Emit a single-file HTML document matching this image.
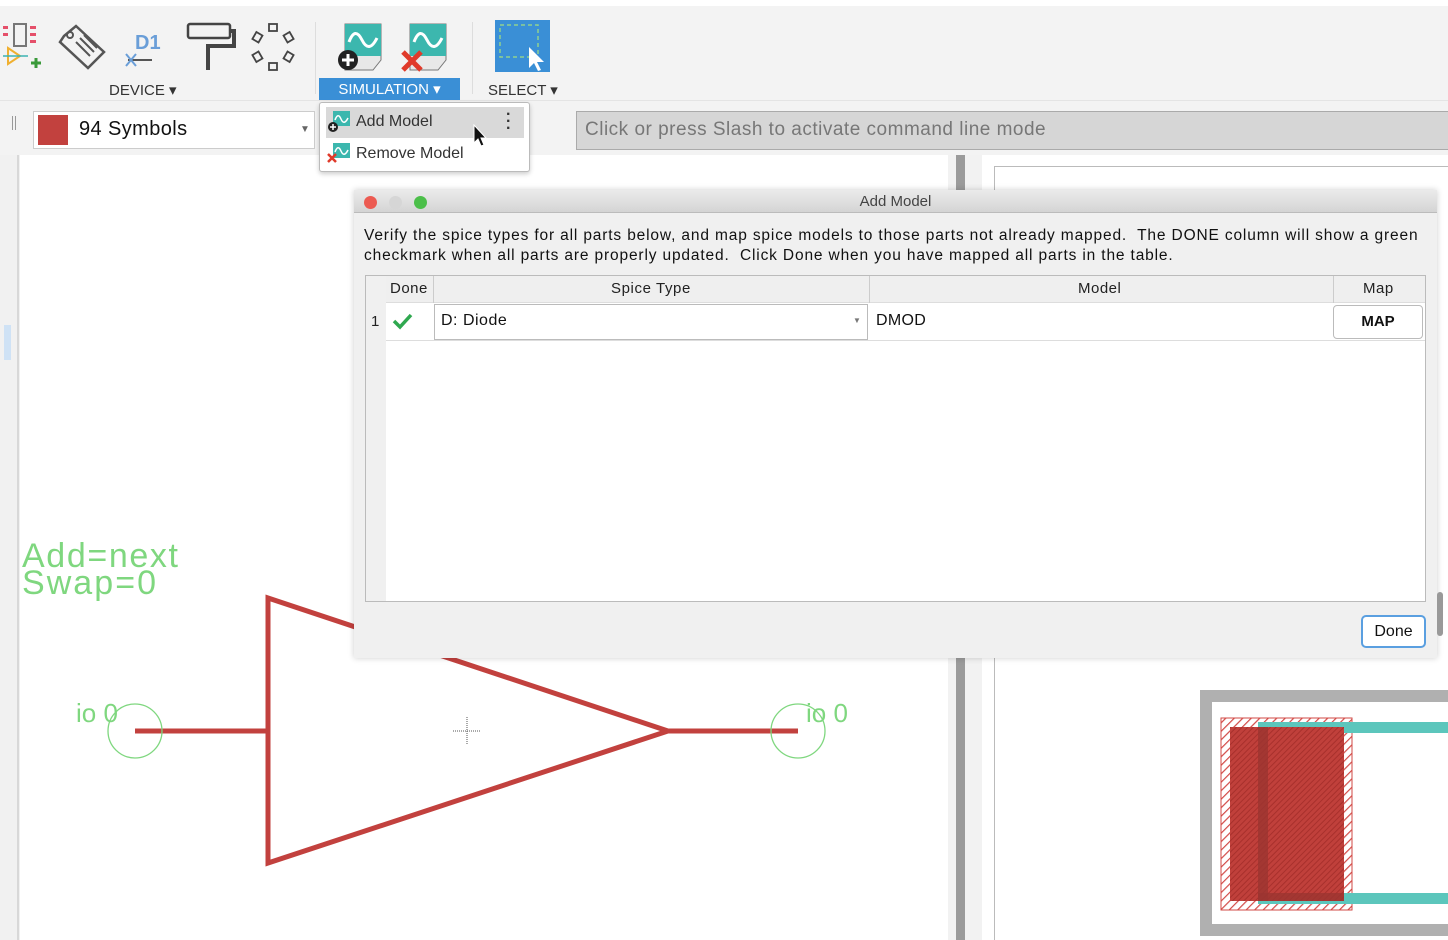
<!DOCTYPE html>
<html><head><style>
*{margin:0;padding:0;box-sizing:border-box}
body{width:1448px;height:940px;overflow:hidden;background:#fff;font-family:"Liberation Sans",sans-serif;position:relative}
.a{position:absolute}
.lbl{font-size:15px;color:#333}
</style></head><body>
<!-- toolbar -->
<div class="a" style="left:0;top:0;width:1448px;height:155px;background:#f3f3f3"></div>
<div class="a" style="left:0;top:0;width:1448px;height:6px;background:#fff"></div>
<div class="a" style="left:0;top:100px;width:1448px;height:1px;background:#e4e4e4"></div>
<div class="a" style="left:315px;top:22px;width:1px;height:72px;background:#ddd"></div>
<div class="a" style="left:472px;top:22px;width:1px;height:72px;background:#ddd"></div>
<svg class="a" style="left:0;top:18px" width="310" height="60">
 <g fill="#e5506a"><rect x="3" y="8" width="5" height="3"/><rect x="3" y="15" width="5" height="3"/><rect x="30" y="8" width="6" height="3"/><rect x="30" y="15" width="6" height="3"/><rect x="30" y="22" width="6" height="3"/></g>
 <rect x="14" y="6" width="12" height="22" fill="none" stroke="#777" stroke-width="2"/>
 <path d="M8 30 L20 38 L8 46 Z" fill="none" stroke="#f0b030" stroke-width="2"/><path d="M3 38 H28" stroke="#3cb3b3" stroke-width="1.5"/>
 <path d="M36 40 V50 M31 45 H41" stroke="#3a9a3a" stroke-width="3"/>
 <path d="M64 18 L76 8 L104 34 L88 50 L60 24 Z" fill="none" stroke="#555" stroke-width="2.5"/><circle cx="70" cy="17" r="3" fill="none" stroke="#555" stroke-width="2"/>
 <path d="M76 24 L90 38 M80 20 L94 34 M84 17 L97 30" stroke="#555" stroke-width="2"/>
 <text x="135" y="31" font-size="20" font-weight="bold" fill="#6a9ed8" font-family="Liberation Sans">D1</text>
 <path d="M128 42 H152" stroke="#555" stroke-width="2"/><path d="M126 36 L136 48 M136 36 L126 48" stroke="#6a9ed8" stroke-width="2"/>
 <rect x="188" y="6" width="42" height="14" rx="2" fill="none" stroke="#444" stroke-width="2.5"/>
 <path d="M230 13 H234 V28 H208 V52" fill="none" stroke="#444" stroke-width="4"/>
 <g fill="none" stroke="#444" stroke-width="1.8"><rect x="269" y="6" width="8" height="7"/><rect x="269" y="45" width="8" height="7"/><rect x="254" y="15" width="7" height="8" transform="rotate(30 257 19)"/><rect x="285" y="15" width="7" height="8" transform="rotate(-30 289 19)"/><rect x="254" y="35" width="7" height="8" transform="rotate(-30 257 39)"/><rect x="285" y="35" width="7" height="8" transform="rotate(30 289 39)"/></g>
</svg>
<div class="a lbl" style="left:109px;top:81px">DEVICE ▾</div>
<svg class="a" style="left:335px;top:20px" width="120" height="55">
 <path d="M10 4 H46 V40 L38 50 H10 Z" fill="#e8e8e8" stroke="#777"/>
 <rect x="10" y="4" width="36" height="32" fill="#3cb7ae"/>
 <path d="M14 22 Q20 6 27 20 T42 18" fill="none" stroke="#fff" stroke-width="3"/>
 <circle cx="13" cy="40" r="10" fill="#222"/><path d="M13 34 V46 M7 40 H19" stroke="#fff" stroke-width="3"/>
 <path d="M75 4 H111 V40 L103 50 H75 Z" fill="#e8e8e8" stroke="#777"/>
 <rect x="75" y="4" width="36" height="32" fill="#3cb7ae"/>
 <path d="M79 22 Q85 6 92 20 T107 18" fill="none" stroke="#fff" stroke-width="3"/>
 <path d="M68 32 L86 50 M86 32 L68 50" stroke="#e03a2a" stroke-width="5"/>
</svg>
<div class="a" style="left:319px;top:78px;width:141px;height:22px;background:#3a8fd6;color:#fff;font-size:15px;text-align:center;line-height:23px">SIMULATION ▾</div>
<div class="a" style="left:495px;top:20px;width:55px;height:52px;background:#3a8fd6"></div>
<svg class="a" style="left:495px;top:20px" width="55" height="52"><rect x="5" y="5" width="38" height="32" fill="none" stroke="#8fd18f" stroke-width="1.5" stroke-dasharray="4 3"/><path d="M34 27 V48 L39 43 L43 51 L46 50 L42 42 L49 42 Z" fill="#fff"/></svg>
<div class="a lbl" style="left:488px;top:81px">SELECT ▾</div>
<!-- second row -->
<div class="a" style="left:12px;top:116px;width:1px;height:14px;background:#999"></div>
<div class="a" style="left:15px;top:116px;width:1px;height:14px;background:#999"></div>
<div class="a" style="left:33px;top:111px;width:282px;height:38px;background:#fff;border:1px solid #ccc"></div>
<div class="a" style="left:38px;top:115px;width:30px;height:30px;background:#c2413e"></div>
<div class="a" style="left:79px;top:118px;font-size:20px;color:#111;letter-spacing:0.4px">94 Symbols</div>
<div class="a" style="left:300px;top:124px;font-size:10px;color:#666">▼</div>
<div class="a" style="left:576px;top:111px;width:872px;height:39px;background:#d6d6d6;border-top:1px solid #aaa;border-bottom:1px solid #aaa;border-left:1px solid #aaa;color:#777;font-size:19px;padding:7px 8px;letter-spacing:0.5px">Click or press Slash to activate command line mode</div>
<!-- left strip -->
<div class="a" style="left:0;top:155px;width:20px;height:785px;background:#f1f1f1"></div>
<div class="a" style="left:17px;top:155px;width:2px;height:785px;background:#d8d8d8"></div>
<div class="a" style="left:4px;top:325px;width:7px;height:35px;background:#cfe2f5"></div>
<!-- separator -->
<div class="a" style="left:948px;top:155px;width:48px;height:785px;background:#f2f2f2"></div>
<div class="a" style="left:956px;top:155px;width:9px;height:785px;background:#9b9b9b"></div>
<div class="a" style="left:982px;top:155px;width:14px;height:785px;background:#fff"></div>
<div class="a" style="left:994px;top:166px;width:454px;height:774px;background:#fff;border-left:1px solid #bbb;border-top:1px solid #bbb"></div>
<!-- schematic -->
<svg class="a" style="left:0;top:0" width="1448" height="940">
 <g stroke="#c2413e" stroke-width="5" fill="none"><path d="M135 731 H268 M268 598 V863 L668 731 Z M668 731 H798"/></g>
 <g stroke="#7fd77f" stroke-width="1.3" fill="none"><circle cx="135" cy="731" r="27"/><circle cx="798" cy="731" r="27"/></g>
 <g fill="#7fd77f" font-family="Liberation Sans"><text x="22" y="567" font-size="34" textLength="156">Add=next</text><text x="22" y="594" font-size="34" textLength="134">Swap=0</text><text x="76" y="722" font-size="26">io 0</text><text x="806" y="722" font-size="26">io 0</text></g>
 <path d="M453 731 H481 M467 717 V745" stroke="#555" stroke-width="1" stroke-dasharray="1 1"/>
 <defs><pattern id="h" width="6" height="6" patternUnits="userSpaceOnUse" patternTransform="rotate(45)"><rect width="6" height="6" fill="#fff"/><rect width="1.2" height="6" fill="#d24a46"/></pattern>
 <pattern id="h2" width="4" height="4" patternUnits="userSpaceOnUse" patternTransform="rotate(45)"><rect width="4" height="4" fill="#c0403b"/><rect width="1" height="4" fill="#a8302c"/></pattern></defs>
 <rect x="1206" y="696" width="260" height="234" fill="none" stroke="#b0b0b0" stroke-width="12"/>
 <rect x="1221" y="718" width="131" height="192" fill="url(#h)" stroke="#d24a46"/>
 <rect x="1258" y="722" width="190" height="11" fill="#5cc6bc"/><rect x="1258" y="893" width="190" height="11" fill="#5cc6bc"/>
 <rect x="1230" y="727" width="114" height="174" fill="url(#h2)"/>
 <rect x="1258" y="727" width="10" height="174" fill="#9b3531" opacity="0.8"/>
 <rect x="1258" y="893" width="86" height="8" fill="#9b3531" opacity="0.8"/>
</svg>
<!-- dialog -->
<div class="a" style="left:354px;top:190px;width:1083px;height:468px;background:#f0f0f0;box-shadow:0 0 6px rgba(0,0,0,.2)">
 <div class="a" style="left:0;top:0;width:1083px;height:23px;background:linear-gradient(#ebebeb,#d4d4d4);border-bottom:1px solid #bbb;text-align:center;font-size:15px;color:#444;line-height:24px">Add Model</div>
 <div class="a" style="left:10px;top:6px;width:13px;height:13px;border-radius:50%;background:#ec5b52"></div>
 <div class="a" style="left:35px;top:6px;width:13px;height:13px;border-radius:50%;background:#d6d6d6"></div>
 <div class="a" style="left:60px;top:6px;width:13px;height:13px;border-radius:50%;background:#4cbf4a"></div>
 <div class="a" style="left:10px;top:36px;font-size:15.5px;color:#111;line-height:20px;white-space:nowrap;letter-spacing:0.85px;font-weight:500">Verify the spice types for all parts below, and map spice models to those parts not already mapped.&nbsp; The DONE column will show a green<br>checkmark when all parts are properly updated.&nbsp; Click Done when you have mapped all parts in the table.</div>
 <div class="a" style="left:11px;top:85px;width:1061px;height:327px;background:#fff;border:1px solid #bbb"></div>
 <div class="a" style="left:12px;top:86px;width:20px;height:325px;background:#f0f0f0"></div>
 <div class="a" style="left:32px;top:86px;width:1039px;height:27px;background:#efefef;border-bottom:1px solid #ddd"></div>
 <div class="a" style="left:36px;top:90px;font-size:15px;color:#222;letter-spacing:0.5px">Done</div>
 <div class="a" style="left:79px;top:86px;width:1px;height:27px;background:#ccc"></div>
 <div class="a" style="left:257px;top:90px;font-size:15px;color:#222;letter-spacing:0.6px">Spice Type</div>
 <div class="a" style="left:515px;top:86px;width:1px;height:27px;background:#ccc"></div>
 <div class="a" style="left:724px;top:90px;font-size:15px;color:#222;letter-spacing:0.5px">Model</div>
 <div class="a" style="left:979px;top:86px;width:1px;height:27px;background:#ccc"></div>
 <div class="a" style="left:1009px;top:90px;font-size:15px;color:#222;letter-spacing:0.5px">Map</div>
 <div class="a" style="left:32px;top:150px;width:1039px;height:1px;background:#ddd"></div>
 <div class="a" style="left:17px;top:123px;font-size:15px;color:#222">1</div>
 <svg class="a" style="left:38px;top:122px" width="22" height="18"><path d="M2 9 L8 15 L19 3" fill="none" stroke="#2fa84f" stroke-width="3.5"/></svg>
 <div class="a" style="left:80px;top:114px;width:434px;height:36px;border:1px solid #bbb;background:#fff"></div>
 <div class="a" style="left:87px;top:122px;font-size:16px;color:#111;letter-spacing:0.5px">D: Diode</div>
 <div class="a" style="left:499px;top:126px;font-size:8px;color:#777">▼</div>
 <div class="a" style="left:522px;top:122px;font-size:16px;color:#111;letter-spacing:0.3px">DMOD</div>
 <div class="a" style="left:979px;top:115px;width:90px;height:34px;border:1px solid #bbb;border-radius:4px;background:#fff;text-align:center;line-height:32px;font-size:15px;color:#111;font-weight:bold">MAP</div>
 <div class="a" style="left:1007px;top:425px;width:65px;height:33px;border:2px solid #5a9fe0;border-radius:5px;background:#fff;text-align:center;line-height:29px;font-size:16px;color:#111">Done</div>
</div>
<div class="a" style="left:1437px;top:592px;width:6px;height:44px;background:#999;border-radius:3px"></div>
<!-- menu -->
<div class="a" style="left:319px;top:102px;width:211px;height:70px;background:#fff;border:1px solid #bbb;border-radius:3px;box-shadow:0 2px 5px rgba(0,0,0,.2)"></div>
<div class="a" style="left:326px;top:107px;width:198px;height:31px;background:#d9d9d9"></div>
<svg class="a" style="left:327px;top:109px" width="30" height="58">
 <rect x="6" y="2" width="17" height="15" fill="#3cb7ae"/><path d="M8 11 Q11 3 14 10 T21 9" fill="none" stroke="#fff" stroke-width="1.5"/><circle cx="6" cy="18" r="5" fill="#222"/><path d="M6 15 V21 M3 18 H9" stroke="#fff" stroke-width="1.5"/>
 <rect x="6" y="34" width="17" height="15" fill="#3cb7ae"/><path d="M8 43 Q11 35 14 42 T21 41" fill="none" stroke="#fff" stroke-width="1.5"/><path d="M1 45 L9 53 M9 45 L1 53" stroke="#e03a2a" stroke-width="2.5"/>
</svg>
<div class="a" style="left:356px;top:113px;font-size:16px;color:#333">Add Model</div>
<div class="a" style="left:356px;top:145px;font-size:16px;color:#333">Remove Model</div>
<div class="a" style="left:506px;top:111px;font-size:16px;font-weight:bold;color:#333;line-height:7px">·<br>·<br>·</div>
<svg class="a" style="left:472px;top:124px" width="16" height="24"><path d="M2 1 V19 L6 15 L9 22 L12 21 L9 14 L14 14 Z" fill="#111" stroke="#fff" stroke-width="1"/></svg>
</body></html>
